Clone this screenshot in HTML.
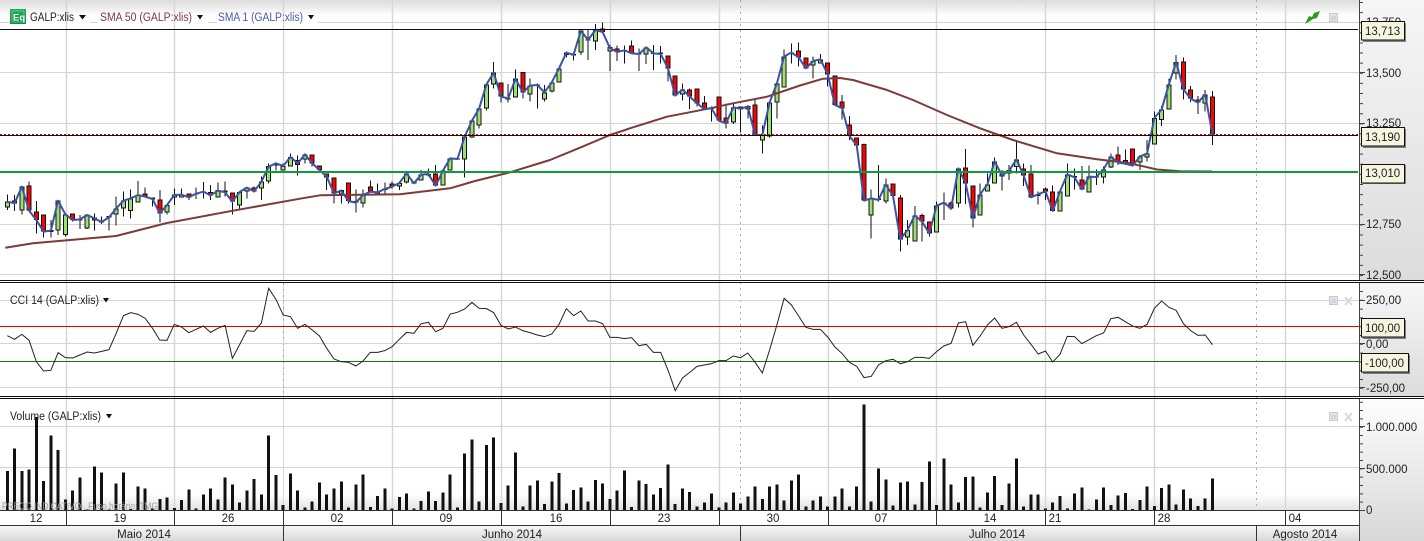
<!DOCTYPE html>
<html><head><meta charset="utf-8"><title>GALP:xlis</title>
<style>
html,body{margin:0;padding:0;background:#fff;width:1424px;height:541px;overflow:hidden}
svg{display:block}
text{font-family:"Liberation Sans",sans-serif;font-size:11.500px;fill:#222}
.n{vector-effect:non-scaling-stroke;fill:none}
.ax{font-size:11.500px}
</style></head><body>
<svg width="1424" height="541" viewBox="0 0 1424 541" xmlns="http://www.w3.org/2000/svg">
<defs>
<linearGradient id="top" x1="0" y1="0" x2="0" y2="1"><stop offset="0" stop-color="#dcdcdc"/><stop offset="1" stop-color="#fff"/></linearGradient>
<linearGradient id="ax1" x1="0" y1="0" x2="0" y2="1"><stop offset="0" stop-color="#f6f6f6"/><stop offset="1" stop-color="#dcdcdc"/></linearGradient>
<linearGradient id="ax3" x1="0" y1="0" x2="0" y2="1"><stop offset="0" stop-color="#fdfdfd"/><stop offset="1" stop-color="#d8d8d8"/></linearGradient>
<linearGradient id="bot" x1="0" y1="0" x2="0" y2="1"><stop offset="0" stop-color="#fff"/><stop offset="1" stop-color="#e2e2e2"/></linearGradient>
<linearGradient id="mon" x1="0" y1="0" x2="0" y2="1"><stop offset="0" stop-color="#f6f6f6"/><stop offset="1" stop-color="#d8d8d8"/></linearGradient>
<linearGradient id="eq" x1="0" y1="0" x2="0" y2="1"><stop offset="0" stop-color="#1fae5a"/><stop offset="1" stop-color="#0c8f44"/></linearGradient>
</defs>
<rect width="1424" height="541" fill="#fff"/>
<!-- backgrounds -->
<rect x="0" y="0" width="1360" height="16" fill="url(#top)"/>
<rect x="1360" y="0" width="64" height="281" fill="url(#ax1)"/>
<rect x="1360" y="283" width="64" height="113" fill="url(#ax1)"/>
<rect x="1360" y="399" width="64" height="142" fill="url(#ax3)"/>
<rect x="0" y="494" width="1359" height="16" fill="url(#bot)"/>
<rect x="0" y="526" width="1359" height="15" fill="url(#mon)"/>
<!-- vertical grid -->
<path d="M66.500 0V510M174.500 0V510M283.500 0V280M392.500 0V510M501.500 0V510M610.500 0V510M719.500 0V510M828.500 0V510M936.500 0V510M1045.500 0V510M1154.500 0V510M1285.500 0V510" stroke="#d6d6d6" stroke-width="1.400" fill="none"/>
<path d="M283.500 283V510" stroke="#d6d6d6" fill="none"/>
<path d="M740.500 0V510M1256.500 0V510M283.500 283V396" stroke="#aaa" stroke-dasharray="2 4" fill="none"/>
<!-- horizontal grid -->
<path d="M0 22.500H10M90 22.500H98M208 22.500H217M318 22.500H1359M0 72.500H1359M0 123.500H1359M0 224.500H1359M0 274.500H1359M0 300.500H1359M0 343.500H1359M0 387.500H1359M0 426.500H1359M0 467.500H1359" stroke="#d4d4d4" fill="none"/>
<!-- candles: x=index, y in 3x px -->
<g transform="translate(7.300 0) scale(7.260 .33333)" shape-rendering="crispEdges">
<path class="n" stroke="#111" stroke-width="1" d="M0 583V630M1 585V633M2 560V643M3 544V632M4 603V700M5 643V713M6 660V713M7 602V705M8 643V710M9 640V665M10 645V687M11 643V687M12 640V692M13 650V672M14 650V692M15 590V676M16 575V650M17 568V655M18 543V607M19 563V590M20 592V620M21 570V668M22 615V644M23 565V615M24 565V590M25 580V600M26 563V597M27 546V595M28 555V600M29 548V592M30 545V590M31 578V643M32 576V625M33 563V595M34 560V578M35 530V600M36 490V550M37 490V512M38 490V512M39 460V500M40 466V527M41 460V490M42 463V500M43 496V518M44 520V570M45 532V610M46 568V610M47 547V610M48 568V638M49 568V622M50 542V575M51 550V584M52 548V585M53 545V565M54 548V570M55 520V550M56 545V552M57 510V541M58 505V530M59 495V557M60 512V557M61 475V512M62 475V478M63 410V533M64 362V414M65 325V385M66 250V332M67 186V265M68 247V308M69 252V308M70 208V292M71 216V295M72 235V305M73 250V326M74 255V305M75 245V278M76 200V247M77 155V172M78 158V182M79 90V165M80 90V180M81 72V150M82 68V96M83 135V213M84 136V183M85 136V190M86 121V162M87 145V213M88 142V192M89 135V210M90 138V190M91 166V245M92 226V287M93 250V302M94 265V327M95 265V320M96 288V330M97 320V365M98 289V365M99 310V385M100 310V372M101 320V396M102 315V355M103 297V405M104 376V460M105 307V412M106 250V356M107 148V262M108 130V190M109 127V200M110 172V205M111 170V236M112 162V190M113 187V260M114 226V315M115 285V358M116 348V420M117 412V436M118 430V602M119 568V716M120 495V605M121 535V610M122 550V590M123 585V755M124 660V735M125 618V724M126 640V725M127 664V710M128 605V698M129 578V660M130 605V630M131 505V622M132 447V612M133 556V683M134 550V646M135 520V574M136 472V550M137 510V572M138 495V540M139 424V520M140 490V558M141 495V592M142 575V613M143 562V600M144 556V633M145 570V634M146 490V589M147 505V568M148 498V568M149 497V577M150 508V555M151 500V550M152 460V504M153 440V495M154 448V495M155 445V497M156 465V510M157 420V485M158 335V433M159 318V378M160 235V328M161 165V238M162 172V298M163 258V306M164 288V342M165 270V335M166 273V435"/>
<path class="n" stroke="#111" stroke-width="5" d="M0 605V622M2 560V631M7 602V691M8 643V705M11 643V685M15 625V643M16 602V625M17 595V633M18 585V607M22 615V637M23 583V592M24 583V592M29 570V592M32 576V616M33 563V574M35 545V565M36 498V545M38 498V512M39 471V500M41 463V478M46 570V584M49 585V610M54 549V560M55 520V548M57 524V541M60 512V557M61 475V512M63 410V478M64 362V412M65 325V376M66 253V326M67 218V253M70 236V292M72 257V283M74 277V298M75 247V275M76 205V247M79 92V157M81 90V124M83 141V154M88 142V163M93 268V283M100 322V368M102 318V328M104 405V421M105 307V410M106 251V307M107 169V262M111 183V196M112 178V190M119 595V646M121 553V605M124 690V712M125 646V724M128 617V698M131 505V610M134 583V646M135 553V574M136 484V550M137 520V530M139 478V501M145 574V634M146 523V589M149 530V577M151 508V532M152 470V502M156 470V487M157 460V472M158 354V433M159 328V360M160 253V328M161 186V220M165 283V310M1 602V610M3 556V632M4 634V660M5 643V695M9 640V660M12 652V662M19 580V590M21 598V640M25 580V592M28 576V587M30 572V578M31 578V605M34 563V574M40 480V495M42 463V490M43 496V510M44 520V532M45 532V580M47 547V603M50 559V575M53 550V560M59 520V557M68 247V290M71 216V277M82 86V96M84 146V156M86 136V160M90 157V162M91 166V205M92 226V287M94 268V290M95 265V310M96 308V327M98 289V362M99 353V370M101 320V328M103 313V405M109 151V172M110 172V205M113 187V223M114 226V315M115 304V325M116 373V408M117 412V436M118 432V602M122 550V588M123 592V718M126 645V665M127 664V700M130 607V625M132 502V550M133 556V655M140 506V527M141 520V592M143 565V574M144 574V633M148 538V568M153 463V488M154 480V491M155 445V497M162 184V268M163 268V296M164 298V308M166 289V404M6 690V696M10 658V662M13 663V667M14 648V652M20 592V598M26 580V584M27 574V578M37 490V496M48 603V608M51 575V581M52 565V570M56 545V550M58 522V526M62 475V478M69 294V298M73 253V257M77 158V165M78 162V166M80 118V122M85 150V153M87 160V163M89 158V162M97 323V327M108 157V161M120 596V600M129 608V612M138 510V520M142 583V588M147 528V532M150 529V533"/>
<path class="n" stroke="#9be070" stroke-width="3" d="M0 608V619M2 563V628M7 605V688M8 646V702M11 646V682M15 628V640M16 605V622M17 598V630M18 588V604M22 618V634M23 586V589M24 586V589M29 573V589M32 579V613M33 566V571M35 548V562M36 501V542M38 501V509M39 474V497M41 466V475M46 573V581M49 588V607M54 552V557M55 523V545M57 527V538M60 515V554M61 478V509M63 413V475M64 365V409M65 328V373M66 256V323M67 221V250M70 239V289M72 260V280M74 280V295M75 250V272M76 208V244M79 95V154M81 93V121M83 144V151M88 145V160M93 271V280M100 325V365M102 321V325M104 408V418M105 310V407M106 254V304M107 172V259M111 186V193M112 181V187M119 598V643M121 556V602M124 693V709M125 649V721M128 620V695M131 508V607M134 586V643M135 556V571M136 487V547M137 523V527M139 481V498M145 577V631M146 526V586M149 533V574M151 511V529M152 473V499M156 473V484M157 463V469M158 357V430M159 331V357M160 256V325M161 189V217M165 286V307"/>
<path class="n" stroke="#ff0000" stroke-width="3" d="M1 605V607M3 559V629M4 637V657M5 646V692M9 643V657M12 655V659M19 583V587M21 601V637M25 583V589M28 579V584M30 575V575.100M31 581V602M34 566V571M40 483V492M42 466V487M43 499V507M44 523V529M45 535V577M47 550V600M50 562V572M53 553V557M59 523V554M68 250V287M71 219V274M82 89V93M84 149V153M86 139V157M91 169V202M92 229V284M94 271V287M95 268V307M96 311V324M98 292V359M99 356V367M101 323V325M103 316V402M109 154V169M110 175V202M113 190V220M114 229V312M115 307V322M116 376V405M117 415V433M118 435V599M122 553V585M123 595V715M126 648V662M127 667V697M130 610V622M132 505V547M133 559V652M140 509V524M141 523V589M143 568V571M144 577V630M148 541V565M153 466V485M154 483V488M155 448V494M162 187V265M163 271V293M164 301V305M166 292V401"/>
</g>
<!-- SMA 50 -->
<polyline fill="none" stroke="#7d3a3a" stroke-width="2" stroke-linejoin="round" points="5.300,247.700 33,243.300 116,236 167,223 233,210.700 300,198.700 320,195.300 400,194.300 450,188.300 475,181 510,172.300 550,160 580,147.700 610,135 633,127.300 667,116.700 710,108.300 733,103.300 767,96.700 800,85.500 823,78.700 840,78 853,80 887,90 913,100 947,115 980,128.300 1013,140 1057,153.300 1097,159.300 1130,163.300 1157,169.500 1180,171.200 1212,171.500"/>
<!-- SMA 1 (close) -->
<g transform="translate(7.300 0) scale(7.260 .33333)">
<polyline class="n" stroke="#3a53a5" stroke-width="2" stroke-linejoin="round" points="0,605 1,610 2,560 3,632 4,660 5,695 6,692 7,602 8,643 9,660 10,658 11,645 12,655 13,666 14,652 15,625 16,602 17,595 18,585 19,590 20,597 21,640 22,615 23,585 24,584 25,592 26,581 27,575 28,586 29,572 30,577 31,605 32,576 33,563 34,574 35,545 36,500 37,490 38,498 39,471 40,490 41,463 42,490 43,510 44,530 45,580 46,572 47,603 48,608 49,585 50,575 51,577 52,567 53,560 54,549 55,520 56,550 57,524 58,522 59,557 60,512 61,475 62,477 63,410 64,362 65,325 66,253 67,218 68,290 69,295 70,236 71,277 72,257 73,255 74,277 75,247 76,205 77,158 78,164 79,92 80,120 81,90 82,96 83,144 84,156 85,151 86,160 87,162 88,142 89,160 90,162 91,205 92,287 93,268 94,290 95,310 96,327 97,325 98,362 99,370 100,322 101,326 102,320 103,405 104,405 105,307 106,251 107,169 108,158 109,172 110,205 111,183 112,178 113,223 114,315 115,325 116,408 117,436 118,602 119,595 120,600 121,553 122,588 123,718 124,690 125,646 126,665 127,700 128,617 129,608 130,625 131,505 132,550 133,655 134,583 135,553 136,484 137,526 138,512 139,478 140,527 141,592 142,583 143,574 144,633 145,574 146,523 147,532 148,568 149,530 150,531 151,508 152,470 153,488 154,491 155,497 156,470 157,460 158,354 159,328 160,253 161,186 162,268 163,296 164,308 165,283 166,404"/>
</g>
<!-- horizontal studies -->
<path d="M0 29.500H1358" stroke="#111" fill="none"/>
<path d="M0 135.500H1358" stroke="#111" fill="none"/>
<path d="M0 134.500H1358" stroke="#e00000" stroke-dasharray="2 2" fill="none"/>
<rect x="0" y="171" width="1358" height="2" fill="#0f9a3c"/>
<!-- CCI -->
<path d="M0 326.500H1360" stroke="#e00000" fill="none"/>
<path d="M0 361.500H1360" stroke="#0a7d0a" fill="none"/>
<g transform="translate(7.300 275) scale(7.260 .33333)">
<polyline class="n" stroke="#222" stroke-width="1" points="0,182 1,193 2,178 3,196 4,260 5,288 6,286 7,233 8,248 9,249 10,240 11,231 12,234 13,229 14,224 15,175 16,122 17,113 18,118 19,130 20,160 21,195 22,196 23,148 24,156 25,173 26,163 27,153 28,172 29,160 30,151 31,250 32,209 33,167 34,169 35,144 36,40 37,73 38,120 39,125 40,160 41,148 42,165 43,183 44,220 45,252 46,260 47,262 48,273 49,258 50,232 51,232 52,227 53,215 54,193 55,172 56,175 57,146 58,142 59,170 60,160 61,117 62,112 63,102 64,82 65,100 66,101 67,113 68,151 69,162 70,156 71,167 72,173 73,180 74,185 75,177 76,148 77,101 78,122 79,108 80,138 81,138 82,146 83,187 84,187 85,191 86,188 87,212 88,208 89,232 90,232 91,285 92,347 93,309 94,292 95,274 96,270 97,266 98,257 99,257 100,243 101,248 102,234 103,262 104,294 105,225 106,150 107,70 108,90 109,123 110,157 111,163 112,163 113,186 114,216 115,236 116,262 117,274 118,308 119,304 120,270 121,257 122,253 123,266 124,260 125,247 126,247 127,250 128,230 129,213 130,205 131,144 132,140 133,211 134,183 135,150 136,129 137,160 138,155 139,142 140,180 141,208 142,237 143,228 144,261 145,238 146,184 147,185 148,206 149,194 150,182 151,174 152,131 153,127 154,140 155,153 156,160 157,148 158,100 159,78 160,97 161,106 162,146 163,167 164,181 165,180 166,209"/>
</g>
<!-- Volume -->
<g transform="translate(7.300 275) scale(7.260 .33333)" shape-rendering="crispEdges">
<path class="n" stroke="#111" stroke-width="3" d="M0 705V588M1 705V520M2 705V588M3 705V583M4 705V426M5 705V618M6 705V482M7 705V525M8 705V674M9 705V647M10 705V608M11 705V703M12 705V575M13 705V593M14 705V703M15 705V625M16 705V592M17 705V702M18 705V635M19 705V640M20 705V700M21 705V672M22 705V667M23 705V699M24 705V675M25 705V644M26 705V700M27 705V658M28 705V641M29 705V674M30 705V608M31 705V629M32 705V682M33 705V647M34 705V612M35 705V658M36 705V482M37 705V600M38 705V690M39 705V595M40 705V647M41 705V697M42 705V679M43 705V622M44 705V658M45 705V641M46 705V620M47 705V697M48 705V628M49 705V598M50 705V696M51 705V663M52 705V640M53 705V700M54 705V666M55 705V655M56 705V700M57 705V678M58 705V650M59 705V678M60 705V652M61 705V598M62 705V697M63 705V535M64 705V493M65 705V679M66 705V510M67 705V487M68 705V684M69 705V632M70 705V533M71 705V695M72 705V631M73 705V617M74 705V687M75 705V619M76 705V594M77 705V685M78 705V645M79 705V637M80 705V679M81 705V615M82 705V625M83 705V672M84 705V647M85 705V587M86 705V696M87 705V616M88 705V627M89 705V658M90 705V639M91 705V568M92 705V687M93 705V640M94 705V651M95 705V695M96 705V682M97 705V656M98 705V698M99 705V683M100 705V652M101 705V685M102 705V665M103 705V634M104 705V672M105 705V634M106 705V628M107 705V676M108 705V617M109 705V598M110 705V695M111 705V676M112 705V665M113 705V695M114 705V664M115 705V640M116 705V695M117 705V634M118 705V389M119 705V679M120 705V581M121 705V613M122 705V691M123 705V622M124 705V620M125 705V688M126 705V621M127 705V559M128 705V690M129 705V550M130 705V628M131 705V683M132 705V606M133 705V605M134 705V697M135 705V652M136 705V603M137 705V690M138 705V626M139 705V551M140 705V695M141 705V659M142 705V658M143 705V700M144 705V682M145 705V663M146 705V700M147 705V656M148 705V637M149 705V703M150 705V674M151 705V638M152 705V690M153 705V662M154 705V654M155 705V702M156 705V675M157 705V634M158 705V693M159 705V639M160 705V628M161 705V688M162 705V644M163 705V670M164 705V693M165 705V671M166 705V611"/>
</g>
<text x="2" y="509.500" textLength="156" lengthAdjust="spacingAndGlyphs" style="font-size:10.500px;fill:#a0a0a0">PREÇO INDICATIVO . Fuso horário: TMG</text>
<!-- panel separators -->
<path d="M0 280.500H1424M0 282.500H1424M0 396.500H1424M0 398.500H1424" stroke="#111" fill="none"/>
<!-- time axis -->
<path d="M0 510.500H1359M0 525.500H1359" stroke="#333" fill="none"/>
<path d="M66.500 510V525M174.500 510V525M283.500 510V541M392.500 510V525M501.500 510V525M610.500 510V525M719.500 510V525M828.500 510V525M936.500 510V525M1045.500 510V525M1154.500 510V525M1285.500 510V525M740.500 526V541M1256.500 526V541" stroke="#333" fill="none"/>
<g text-anchor="middle">
<text x="36" y="522">12</text><text x="120" y="522">19</text><text x="228" y="522">26</text><text x="337" y="522">02</text><text x="446" y="522">09</text><text x="556" y="522">16</text><text x="664" y="522">23</text><text x="773" y="522">30</text><text x="881" y="522">07</text><text x="990" y="522">14</text><text x="1055" y="522">21</text><text x="1164" y="522">28</text><text x="1295" y="522">04</text>
<text x="144" y="538">Maio 2014</text><text x="512" y="538">Junho 2014</text><text x="997" y="538">Julho 2014</text><text x="1305" y="538">Agosto 2014</text>
</g>
<!-- right axis -->
<path d="M1359.500 0V280M1359.500 283V396M1359.500 399V541" stroke="#444" fill="none"/>
<path d="M1361.500 2V280" stroke="#444" stroke-width="3" stroke-dasharray="1 9.110" fill="none"/>
<path d="M1361.500 291V396" stroke="#444" stroke-width="3" stroke-dasharray="1 7.800" fill="none"/>
<path d="M1361.500 401.700V510" stroke="#444" stroke-width="3" stroke-dasharray="1 7.330" fill="none"/>
<path d="M1360 72.500H1365M1360 123.500H1365M1360 224.500H1365M1360 274.500H1365M1360 300.500H1365M1360 343.500H1365M1360 387.500H1365M1360 426.500H1365M1360 468.500H1365M1360 510.500H1365" stroke="#444" fill="none"/>
<g>
<text class="ax" x="1366" y="26">13,750</text>
<text class="ax" x="1366" y="77">13,500</text>
<text class="ax" x="1366" y="127">13,250</text>
<text class="ax" x="1366" y="228">12,750</text>
<text class="ax" x="1366" y="279">12,500</text>
<text class="ax" x="1366" y="304">250,00</text>
<text class="ax" x="1366" y="348">0,00</text>
<text class="ax" x="1366" y="392">-250,00</text>
<text class="ax" x="1366" y="431">1.000.000</text>
<text class="ax" x="1366" y="473">500.000</text>
<text class="ax" x="1366" y="514">0</text>
</g>
<!-- value labels -->
<g fill="#555" opacity=".7">
<rect x="1363" y="23" width="43" height="19"/><rect x="1363" y="129" width="43" height="19"/><rect x="1363" y="165" width="43" height="19"/><rect x="1363" y="320" width="43" height="19"/><rect x="1363" y="355" width="47" height="19"/>
</g>
<g fill="#f6f5df" stroke="#111">
<rect x="1361.500" y="21.500" width="43" height="18.500"/><rect x="1361.500" y="127.500" width="43" height="18.500"/><rect x="1361.500" y="164.500" width="43" height="18.500"/><rect x="1361.500" y="318.500" width="43" height="18.500"/><rect x="1361.500" y="353.500" width="47" height="18.500"/>
</g>
<text class="ax" x="1365" y="35">13,713</text>
<text class="ax" x="1365" y="141">13,190</text>
<text class="ax" x="1365" y="177">13,010</text>
<text class="ax" x="1365" y="332">100,00</text>
<text class="ax" x="1365" y="367">-100,00</text>
<!-- legends -->
<rect x="10" y="9" width="16" height="15" fill="url(#eq)"/>
<rect x="12" y="11" width="12" height="11" fill="none" stroke="#6fd09a" stroke-width=".8"/>
<text x="13" y="20.500" style="font-size:9.500px;font-weight:bold;fill:#fff">Eq</text>
<text x="30" y="21" textLength="44" lengthAdjust="spacingAndGlyphs">GALP:xlis</text>
<polygon points="79,15 86,15 82.500,19.500" fill="#111"/>
<text x="100" y="21" textLength="92" lengthAdjust="spacingAndGlyphs" style="fill:#7d3a3a">SMA 50 (GALP:xlis)</text>
<polygon points="197,15 203,15 200,19.500" fill="#111"/>
<text x="218" y="21" textLength="85" lengthAdjust="spacingAndGlyphs" style="fill:#4a5ca8">SMA 1 (GALP:xlis)</text>
<polygon points="308,15 314,15 311,19.500" fill="#111"/>
<text x="10" y="304" textLength="89" lengthAdjust="spacingAndGlyphs">CCI 14 (GALP:xlis)</text>
<polygon points="103,298 109,298 106,302.500" fill="#111"/>
<text x="10" y="420" textLength="91" lengthAdjust="spacingAndGlyphs">Volume (GALP:xlis)</text>
<polygon points="106,414 112,414 109,418.500" fill="#111"/>
<!-- window icons -->
<path d="M1305 24L1309 16L1312 17L1314 13L1320 11L1317 18L1313 19L1310 21Z" fill="#2f9a1e"/>
<g fill="#dfe5ea" stroke="#c6ccd2">
<rect x="1329.500" y="13.500" width="8" height="8"/><rect x="1329.500" y="296.500" width="8" height="8"/><rect x="1329.500" y="412.500" width="8" height="8"/>
</g>
<g fill="#fff" stroke="#bcc4cb">
<rect x="1332" y="17" width="3" height="2"/><rect x="1332" y="300" width="3" height="2"/><rect x="1332" y="416" width="3" height="2"/>
</g>
<path d="M1345 297L1352 305M1352 297L1345 305M1345 413L1352 421M1352 413L1345 421" stroke="#d4dadf" stroke-width="2" fill="none"/>
</svg>
</body></html>
